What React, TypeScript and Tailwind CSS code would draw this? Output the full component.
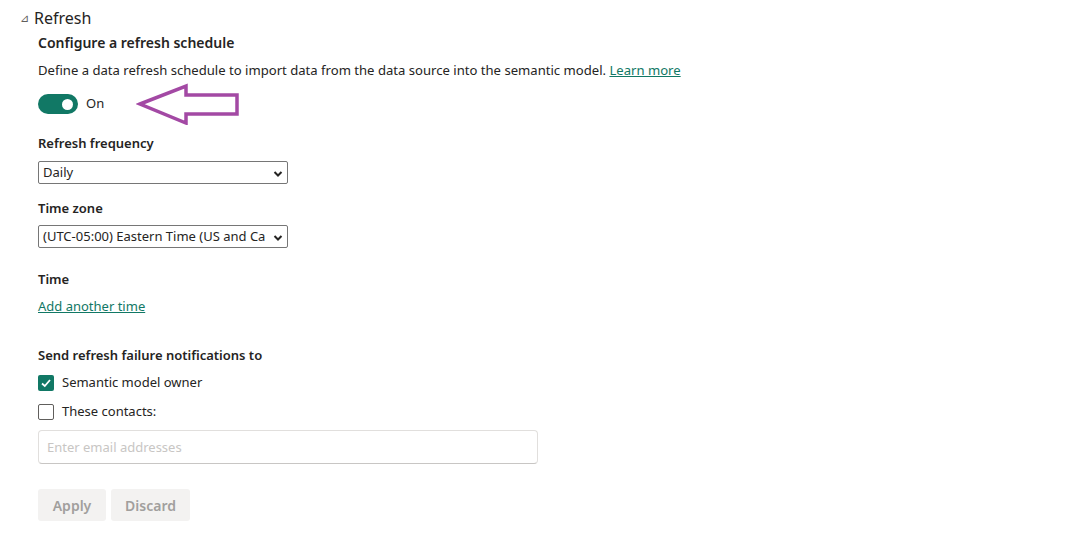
import React from "react";

function Chevron() {
  return (
    <svg width="10" height="10" viewBox="0 0 10 10" className="absolute right-[4px] top-[7px]">
      <path d="M1.5 3 L5 6.5 L8.5 3" fill="none" stroke="#252423" strokeWidth="2" />
    </svg>
  );
}

export default function App() {
  return (
    <div className="w-[1083px] h-[534px] bg-white text-[#252423] font-['Noto_Sans',sans-serif] relative">
      <div className="pt-[6px] pl-[20px]">
        <div className="flex items-center h-[24px]">
          <span className="text-[11px] text-[#605e5c] w-[14px]">⊿</span>
          <span className="text-[16px]">Refresh</span>
        </div>
        <div className="pl-[18px]">
          <div className="mt-[2px] text-[14px] font-semibold h-[22px] leading-[22px]">Configure a refresh schedule</div>
          <div className="mt-[5px] text-[13.1px] h-[22px] leading-[22px]">
            Define a data refresh schedule to import data from the data source into the semantic model.{" "}
            <a className="text-[#117865] underline">Learn more</a>
          </div>
          <div className="mt-[13px] flex items-center h-[20px]">
            <div className="w-[40px] h-[20px] rounded-full bg-[#117865] flex items-center justify-end pr-[5px]">
              <div className="w-[11px] h-[11px] rounded-full bg-white" />
            </div>
            <span className="ml-[8px] text-[13px]">On</span>
            <svg width="104" height="42" viewBox="0 0 104 42" className="ml-[32px]">
              <polygon
                points="4,21 50,3 50,12 101,12 101,31 50,31 50,40"
                fill="none"
                stroke="#a349a4"
                strokeWidth="3.5"
                strokeLinejoin="miter"
              />
            </svg>
          </div>
          <div className="mt-[18px] text-[13px] font-semibold h-[22px] leading-[22px]">Refresh frequency</div>
          <div className="mt-[7px] relative w-[250px] h-[23px] border border-[#767676] rounded-[2px] text-[13px] leading-[21px] pl-[4px]">
            Daily
            <Chevron />
          </div>
          <div className="mt-[13px] text-[13px] font-semibold h-[22px] leading-[22px]">Time zone</div>
          <div className="mt-[6px] relative w-[250px] h-[23px] border border-[#767676] rounded-[2px] text-[13px] leading-[21px] pl-[4px] whitespace-nowrap overflow-hidden">
            (UTC-05:00) Eastern Time (US and Ca
            <Chevron />
          </div>
          <div className="mt-[20px] text-[13px] font-semibold h-[22px] leading-[22px]">Time</div>
          <div className="mt-[5px] text-[13px] h-[22px] leading-[22px]">
            <a className="text-[#117865] underline">Add another time</a>
          </div>
          <div className="mt-[27px] text-[13px] font-semibold h-[22px] leading-[22px]">Send refresh failure notifications to</div>
          <div className="mt-[7px] flex items-center h-[20px]">
            <div className="w-[16px] h-[16px] bg-[#117865] rounded-[2px] flex items-center justify-center">
              <svg width="12" height="12" viewBox="0 0 12 12">
                <path d="M2 6.5 L4.8 9 L10 3" fill="none" stroke="white" strokeWidth="1.8" />
              </svg>
            </div>
            <span className="ml-[8px] text-[13px]">Semantic model owner</span>
          </div>
          <div className="mt-[9px] flex items-center h-[20px]">
            <div className="w-[16px] h-[16px] border border-[#605e5c] rounded-[2px] bg-white" />
            <span className="ml-[8px] text-[13px]">These contacts:</span>
          </div>
          <div className="mt-[8px] w-[500px] h-[34px] border border-[#e1dfdd] border-b-[#c8c6c4] rounded-[4px] text-[13px] text-[#c8c6c4] leading-[32px] pl-[8px]">
            Enter email addresses
          </div>
          <div className="mt-[25px] flex gap-[5px]">
            <div className="w-[68px] h-[32px] bg-[#f3f2f1] rounded-[3px] text-[14px] font-semibold text-[#a19f9d] flex items-center justify-center">Apply</div>
            <div className="w-[79px] h-[32px] bg-[#f3f2f1] rounded-[3px] text-[14px] font-semibold text-[#a19f9d] flex items-center justify-center">Discard</div>
          </div>
        </div>
      </div>
    </div>
  );
}
